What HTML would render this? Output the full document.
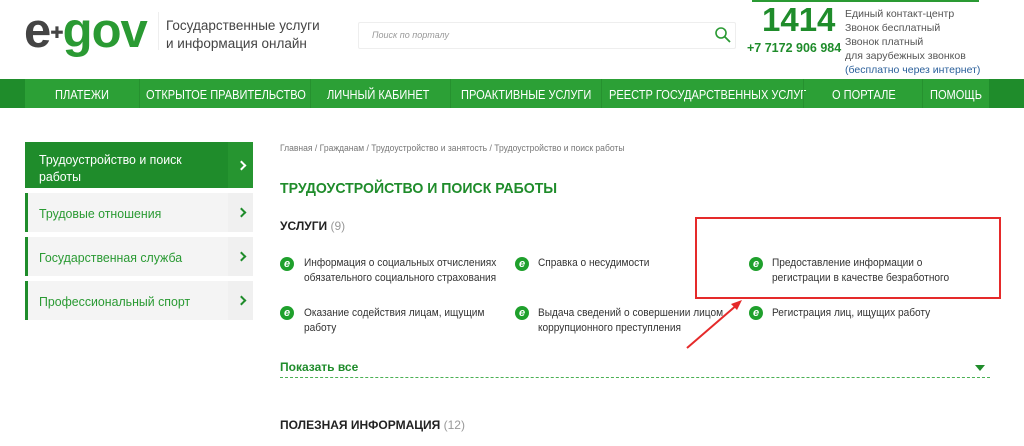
<!DOCTYPE html>
<html><head><meta charset="utf-8"><style>
*{margin:0;padding:0;box-sizing:border-box}
body{width:1024px;height:446px;overflow:hidden;background:#fff;font-family:"Liberation Sans","DejaVu Sans",sans-serif;position:relative;color:#333}
.a{position:absolute;white-space:nowrap}
.nav{position:absolute;left:0;top:79px;width:1024px;height:29px;background:#2ca036}
.nav .dk{position:absolute;top:0;height:29px;background:#1f8c2b}
.nav span{position:absolute;top:8px;color:#fff;font-size:13px;white-space:nowrap;transform:scaleX(0.85);transform-origin:0 0}
.nav i{position:absolute;top:0;width:1px;height:29px;background:#26912f}
.side{position:absolute;left:25px;width:228px;background:#f4f4f4;border-left:3px solid #1f8c2b;color:#2a9a33;font-size:13px}
.side .t{position:absolute;left:11px;transform:scaleX(0.95);transform-origin:0 0}
.side .c{position:absolute;right:0;top:0;width:25px;height:100%;background:#f0f0f0}
.chev{position:absolute;right:8px;width:7px;height:7px;border-right:2px solid #1f8c2b;border-top:2px solid #1f8c2b;transform:rotate(45deg)}
.e{position:absolute;width:14px;height:14px;border-radius:50%;background:#1fa02c;color:#fff;font-size:11px;font-weight:bold;font-style:italic;text-align:center;line-height:14px}
.s{position:absolute;font-size:11px;line-height:15px;color:#333;white-space:nowrap;transform:scaleX(0.92);transform-origin:0 0}
</style></head><body>
<div class="a" style="left:24px;top:4px;font-size:49px;font-weight:bold;letter-spacing:-1px;line-height:54px"><span style="color:#444">e</span><span style="color:#444;font-size:16px;vertical-align:middle">✚</span><span style="color:#2a9a33">gov</span></div>
<div class="a" style="left:158px;top:12px;width:1px;height:38px;background:#eee"></div>
<div class="a" style="left:166px;top:17px;font-size:13.5px;line-height:18px;color:#444">Государственные услуги<br>и информация онлайн</div>
<div class="a" style="left:358px;top:22px;width:378px;height:27px;border:1px solid #eee;border-radius:2px"></div>
<div class="a" style="left:372px;top:30px;font-size:9px;font-style:italic;color:#999">Поиск по порталу</div>
<svg class="a" style="left:714px;top:26px" width="18" height="18" viewBox="0 0 18 18"><circle cx="7" cy="7" r="5" fill="none" stroke="#2a9a33" stroke-width="1.6"/><path d="M11 11l5 5" stroke="#2a9a33" stroke-width="1.8"/></svg>
<div class="a" style="left:752px;top:0;width:227px;height:2px;background:#2a9a33"></div>
<div class="a" style="left:762px;top:2px;font-size:33px;font-weight:bold;color:#1f8c2b;line-height:36px">1414</div>
<div class="a" style="left:747px;top:41px;font-size:12.5px;font-weight:bold;color:#1f8c2b">+7 7172 906 984</div>
<div class="a" style="left:845px;top:7px;font-size:10.5px;line-height:14px;color:#555">Единый контакт-центр<br>Звонок бесплатный<br>Звонок платный<br>для зарубежных звонков<br><span style="color:#2a5f9a">(бесплатно через интернет)</span></div>
<div class="nav"><div class="dk" style="left:0;width:25px"></div><div class="dk" style="left:989px;width:35px"></div>
<span style="left:55px">ПЛАТЕЖИ</span><i style="left:139px"></i>
<span style="left:146px">ОТКРЫТОЕ ПРАВИТЕЛЬСТВО</span><i style="left:310px"></i>
<span style="left:327px">ЛИЧНЫЙ КАБИНЕТ</span><i style="left:450px"></i>
<span style="left:461px">ПРОАКТИВНЫЕ УСЛУГИ</span><i style="left:601px"></i>
<span style="left:609px">РЕЕСТР ГОСУДАРСТВЕННЫХ УСЛУГ</span><i style="left:803px"></i>
<span style="left:832px">О ПОРТАЛЕ</span><i style="left:922px"></i>
<span style="left:930px">ПОМОЩЬ</span></div>
<div class="side" style="top:142px;height:46px;background:#1f8c2b;border-left:none;color:#fff"><div class="t" style="left:14px;top:9px;line-height:17px">Трудоустройство и поиск<br>работы</div><div class="c" style="background:#269530"></div><div class="chev" style="top:20px;border-color:#fff"></div></div>
<div class="side" style="top:193px;height:39px"><div class="c"></div><div class="t" style="top:13px">Трудовые отношения</div><div class="chev" style="top:16px"></div></div>
<div class="side" style="top:237px;height:39px"><div class="c"></div><div class="t" style="top:13px">Государственная служба</div><div class="chev" style="top:16px"></div></div>
<div class="side" style="top:281px;height:39px"><div class="c"></div><div class="t" style="top:13px">Профессиональный спорт</div><div class="chev" style="top:16px"></div></div>
<div class="a" style="left:280px;top:143px;font-size:9px;color:#777;transform:scaleX(0.95);transform-origin:0 0">Главная / Гражданам / Трудоустройство и занятость / Трудоустройство и поиск работы</div>
<div class="a" style="left:280px;top:180px;font-size:15px;font-weight:bold;color:#1f8c2b;transform:scaleX(0.94);transform-origin:0 0">ТРУДОУСТРОЙСТВО И ПОИСК РАБОТЫ</div>
<div class="a" style="left:280px;top:219px;font-size:12px;font-weight:bold;color:#222">УСЛУГИ <span style="font-weight:normal;color:#999">(9)</span></div>
<div class="e" style="left:280px;top:257px">e</div><div class="s" style="left:304px;top:256px">Информация о социальных отчислениях<br>обязательного социального страхования</div>
<div class="e" style="left:515px;top:257px">e</div><div class="s" style="left:538px;top:256px">Справка о несудимости</div>
<div class="e" style="left:749px;top:257px">e</div><div class="s" style="left:772px;top:256px">Предоставление информации о<br>регистрации в качестве безработного</div>
<div class="e" style="left:280px;top:306px">e</div><div class="s" style="left:304px;top:306px">Оказание содействия лицам, ищущим<br>работу</div>
<div class="e" style="left:515px;top:306px">e</div><div class="s" style="left:538px;top:306px">Выдача сведений о совершении лицом<br>коррупционного преступления</div>
<div class="e" style="left:749px;top:306px">e</div><div class="s" style="left:772px;top:306px">Регистрация лиц, ищущих работу</div>
<div class="a" style="left:695px;top:217px;width:306px;height:82px;border:2px solid #e52a2a"></div>
<svg class="a" style="left:680px;top:292px" width="70" height="62"><path d="M7 56L58 12" stroke="#e52a2a" stroke-width="2"/><path d="M62 8l-11 4 6 6z" fill="#e52a2a"/></svg>
<div class="a" style="left:280px;top:360px;font-size:12px;font-weight:bold;color:#1f8c2b">Показать все</div>
<div class="a" style="left:975px;top:365px;width:0;height:0;border-left:5px solid transparent;border-right:5px solid transparent;border-top:6px solid #1f8c2b"></div>
<div class="a" style="left:280px;top:377px;width:710px;border-top:1px dashed #4bb054"></div>
<div class="a" style="left:280px;top:418px;font-size:12px;font-weight:bold;color:#222">ПОЛЕЗНАЯ ИНФОРМАЦИЯ <span style="font-weight:normal;color:#999">(12)</span></div>
</body></html>
